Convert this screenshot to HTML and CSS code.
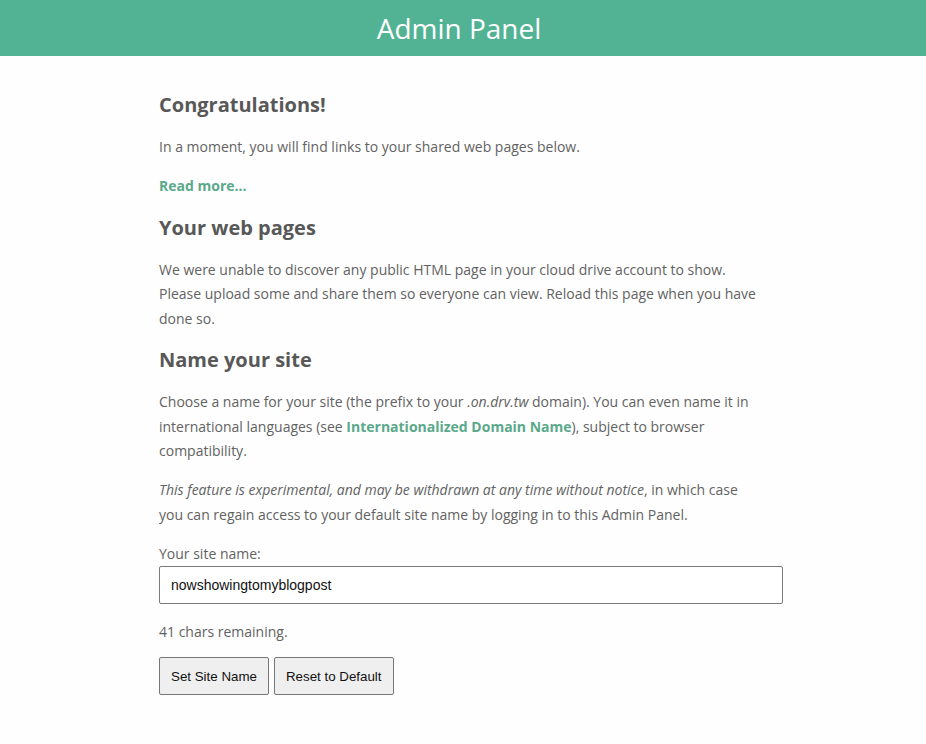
FILE: index.html
```html
<!DOCTYPE html>
<html lang="en">
<head>
<meta charset="utf-8">
<title>Admin Panel</title>
<link rel="stylesheet" href="styles.css">
</head>
<body>
<header class="topbar">
  <h1 class="topbar-title">Admin Panel</h1>
</header>
<main class="content">
  <h2 class="section-title">Congratulations!</h2>
  <p class="text">In a moment, you will find links to your shared web pages below.</p>
  <p class="text"><a class="link" href="#">Read more...</a></p>

  <h2 class="section-title">Your web pages</h2>
  <p class="text">We were unable to discover any public HTML page in your cloud drive account to show. Please upload some and share them so everyone can view. Reload this page when you have done so.</p>

  <h2 class="section-title">Name your site</h2>
  <p class="text">Choose a name for your site (the prefix to your <em>.on.drv.tw</em> domain). You can even name it in international languages (see <a class="link" href="#">Internationalized Domain Name</a>), subject to browser compatibility.</p>
  <p class="text"><em>This feature is experimental, and may be withdrawn at any time without notice</em>, in which case you can regain access to your default site name by logging in to this Admin Panel.</p>

  <label class="field-label" for="site">Your site name:</label>
  <input class="field-input" id="site" type="text" value="nowshowingtomyblogpost">
  <p class="text text-count">41 chars remaining.</p>
  <div class="actions">
    <button class="btn" type="button">Set Site Name</button>
    <button class="btn" type="button">Reset to Default</button>
  </div>
</main>
</body>
</html>
```
FILE: styles.css
```css
html, body {
  margin: 0;
  padding: 0;
  background: #fefefe;
}
body {
  font-family: "Open Sans", "Liberation Sans", sans-serif;
  color: #626262;
  font-size: 14px;
}
.topbar {
  background: #52b394;
  height: 56px;
  display: flex;
  align-items: center;
  justify-content: center;
}
.topbar-title {
  margin: 0 8px 0 0;
  font-weight: 400;
  font-size: 28px;
  color: #ffffff;
  line-height: 1;
}
.content {
  width: 624px;
  margin: 0 auto;
  padding: 36px 0 40px 16px;
}
.section-title {
  font-size: 20px;
  font-weight: 700;
  line-height: 26px;
  margin: 0 0 17px;
  color: #585858;
}
.text + .section-title {
  margin-top: 16px;
}
.text {
  margin: 0 0 14.5px;
  max-width: 600px;
  line-height: 24.5px;
}
.text-count {
  margin-bottom: 13px;
}
.link {
  color: #5aa98a;
  font-weight: 700;
  text-decoration: none;
}
.field-label {
  display: block;
  line-height: 24px;
}
.field-input {
  display: block;
  box-sizing: border-box;
  width: 624px;
  height: 38px;
  margin: 0 0 16px;
  padding: 0 11px;
  border: 1px solid #7a7a7a;
  border-radius: 2px;
  font-family: "Liberation Sans", Arial, sans-serif;
  font-size: 14px;
  color: #111;
  background: #fff;
}
.actions {
  display: flex;
  gap: 5px;
}
.btn {
  height: 38px;
  padding: 0 11px;
  border: 1px solid #767676;
  border-radius: 2px;
  background: #efefef;
  font-family: "Liberation Sans", Arial, sans-serif;
  font-size: 13.33px;
  color: #111;
}
```
